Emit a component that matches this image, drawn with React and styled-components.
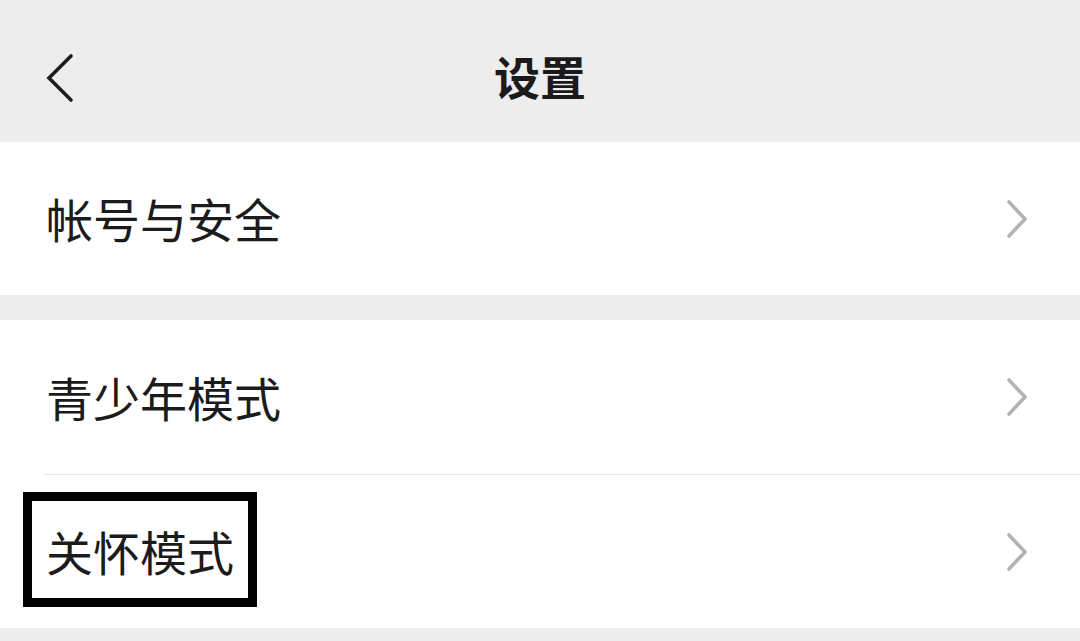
import React from "react";
import styled, { createGlobalStyle } from "styled-components";

const Global = createGlobalStyle`
  html, body { margin: 0; padding: 0; background: #ededed; }
  body { font-family: "Noto Sans CJK SC", "Noto Sans", sans-serif; color: #1b1b1b; }
`;

const Page = styled.div`
  width: 1080px;
  height: 641px;
  background: #ededed;
  overflow: hidden;
`;

const Header = styled.header`
  position: relative;
  height: 142px;
  display: flex;
  align-items: center;
  justify-content: center;
  background: #ededed;
`;

const BackButton = styled.div`
  position: absolute;
  left: 45px;
  top: 53px;
  width: 30px;
  height: 50px;
  display: flex;
`;

const Title = styled.h1`
  margin: 0;
  margin-top: 8px;
  font-size: 46px;
  font-weight: 700;
  line-height: 1;
  color: #1a1a1a;
  letter-spacing: 0;
`;

const Group = styled.section`
  background: #fff;
  margin-bottom: ${(p) => p.$gap || 0}px;
`;

const Row = styled.div`
  position: relative;
  height: ${(p) => p.$h || 153}px;
  display: flex;
  align-items: center;
  justify-content: space-between;
  padding: 0 52px 0 46px;
  box-sizing: border-box;
`;

const Divider = styled.div`
  height: 1px;
  margin-left: 44px;
  background: #e6e6e6;
`;

const Label = styled.span`
  font-size: 47px;
  line-height: 1;
  color: #1b1b1b;
  margin-top: -2px;
`;

const Highlight = styled.div`
  position: absolute;
  left: 23px;
  top: 17px;
  width: 234px;
  height: 115px;
  border: 9px solid #000;
  box-sizing: border-box;
  pointer-events: none;
`;

const Arrow = () => (
  <svg width="22" height="38" viewBox="0 0 22 38" fill="none">
    <path d="M3 2 L19 19 L3 36" stroke="#b3b3b3" strokeWidth="3.6" strokeLinecap="round" strokeLinejoin="round" />
  </svg>
);

const Back = () => (
  <svg width="30" height="50" viewBox="0 0 30 50" fill="none">
    <path d="M26 3 L4 25 L26 47" stroke="#1e1e1e" strokeWidth="3.6" strokeLinecap="round" strokeLinejoin="miter" />
  </svg>
);

export default function App() {
  return (
    <Page>
      <Global />
      <Header>
        <BackButton>
          <Back />
        </BackButton>
        <Title>设置</Title>
      </Header>
      <Group $gap={25}>
        <Row $h={153}>
          <Label>帐号与安全</Label>
          <Arrow />
        </Row>
      </Group>
      <Group $gap={13}>
        <Row $h={154}>
          <Label>青少年模式</Label>
          <Arrow />
        </Row>
        <Divider />
        <Row $h={153}>
          <Label>关怀模式</Label>
          <Arrow />
          <Highlight />
        </Row>
      </Group>
    </Page>
  );
}
